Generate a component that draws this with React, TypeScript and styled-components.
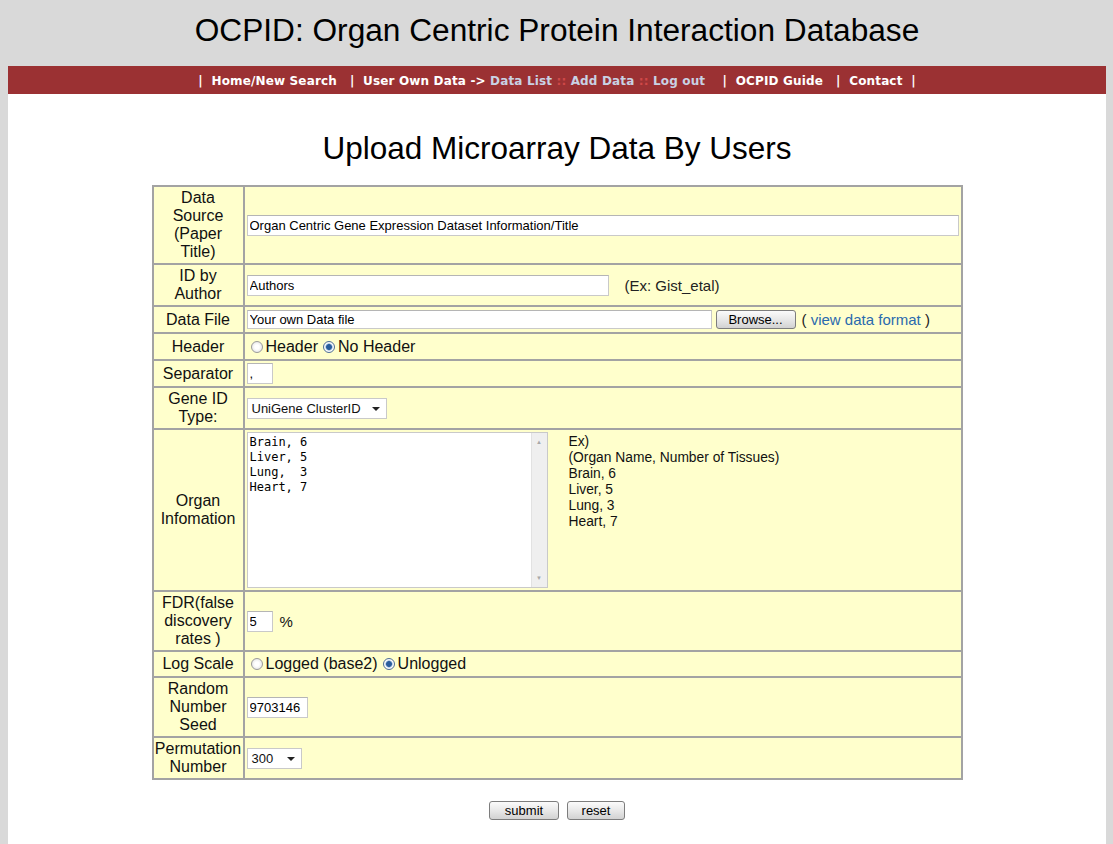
import styled, { createGlobalStyle } from "styled-components";

const GlobalStyle = createGlobalStyle`
  html, body {
    margin: 0;
    padding: 0;
    background: #d9d9d9;
    font-family: "Liberation Sans", Arial, sans-serif;
  }
`;

const Page = styled.div`
  min-height: 844px;
  display: flex;
  flex-direction: column;
  padding: 0 7px 0 8px;
`;

const Header = styled.header`
  height: 66px;
  display: flex;
  align-items: center;
  justify-content: center;
  padding-bottom: 6px;
  box-sizing: border-box;
  font-size: 31.65px;
  color: #000;
`;

const NavBar = styled.nav`
  height: 28px;
  background: #9b3133;
  display: flex;
  align-items: center;
  justify-content: center;
  font-family: "DejaVu Sans", Verdana, sans-serif;
  font-weight: bold;
  font-size: 12px;
  color: #fff;
  white-space: pre;
  letter-spacing: 0.15px;
  padding-top: 1px;
  box-sizing: border-box;
`;

const NavLink = styled.span<{ $sub?: boolean }>`
  color: ${(p) => (p.$sub ? "#c9d2e4" : "#fff")};
`;

const Sep = styled.span`
  color: #d04848;
`;

const Content = styled.main`
  flex: 1;
  background: #fff;
  display: flex;
  flex-direction: column;
  align-items: center;
  padding-top: 36px;
`;

const Title = styled.h1`
  margin: 0 0 19px;
  font-size: 31.5px;
  line-height: 36px;
  font-weight: normal;
`;

const Table = styled.table`
  width: 811px;
  border-collapse: separate;
  border-spacing: 0;
  border: 1px solid #a3a3a3;
  background: #ffffcc;
`;

const Label = styled.td`
  width: 89px;
  padding: 2px 1px;
  border: 1px solid #a3a3a3;
  text-align: center;
  font-size: 16px;
  line-height: 18px;
  color: #111;
`;

const Cell = styled.td`
  padding: 2px 2px;
  border: 1px solid #a3a3a3;
  font-size: 16px;
  color: #111;
`;

const Line = styled.div`
  display: flex;
  align-items: center;
  gap: 4px;
  min-height: 21px;
`;

const TextInput = styled.input<{ $w: number }>`
  width: ${(p) => p.$w}px;
  height: 21px;
  box-sizing: border-box;
  border: 1px solid #c9c9c9;
  border-top-color: #b5b5b5;
  background: #fff;
  font-family: "Liberation Sans", Arial, sans-serif;
  font-size: 13px;
  padding: 0 2px;
  margin: 0;
  color: #000;
  outline: none;
  display: block;
`;

const Note = styled.span`
  font-size: 15px;
  margin-left: 12px;
  color: #222;
`;

const LinkNote = styled.span`
  font-size: 15px;
  color: #222;
  margin-left: 2px;
  a {
    color: #2a6aae;
    text-decoration: none;
  }
`;

const GrayButton = styled.button<{ $w: number }>`
  width: ${(p) => p.$w}px;
  height: 19px;
  padding: 0;
  border: 1px solid #7d7d7d;
  border-radius: 3px;
  background: linear-gradient(#fbfbfb, #e6e6e6 55%, #d2d2d2);
  font-family: "Liberation Sans", Arial, sans-serif;
  font-size: 13px;
  color: #000;
`;

const RadioGroup = styled.div`
  display: flex;
  align-items: center;
  height: 21px;
  padding-left: 4px;
`;

const RadioLabel = styled.label`
  display: flex;
  align-items: center;
  margin-right: 5px;
  font-size: 16px;
`;

const Radio = styled.input.attrs({ type: "radio" })`
  appearance: none;
  width: 12px;
  height: 12px;
  margin: 0 3px 0 0;
  border-radius: 50%;
  border: 1px solid #9a9a9a;
  background: radial-gradient(circle, #fff 30%, #dcdcdc 100%);
  &:checked {
    background: radial-gradient(circle, #2a5d9c 0 2.5px, #8fb3d9 3.2px, #fff 4px, #e4e4e4 100%);
    border-color: #4e6f96;
  }
`;

const SelectBox = styled.div<{ $w: number }>`
  position: relative;
  width: ${(p) => p.$w}px;
  height: 21px;
  box-sizing: border-box;
  border: 1px solid #c9c9c9;
  background: #fff;
  font-size: 13px;
  line-height: 19px;
  padding-left: 4px;
  margin: 6px 0 5px;
  &::after {
    content: "";
    position: absolute;
    right: 6px;
    top: 8px;
    border-left: 4px solid transparent;
    border-right: 4px solid transparent;
    border-top: 4px solid #222;
  }
`;

const OrganWrap = styled.div`
  display: flex;
  gap: 21px;
`;

const AreaBox = styled.div`
  display: flex;
  width: 301px;
  height: 156px;
  box-sizing: border-box;
  border: 1px solid #c9c9c9;
  background: #fff;
`;

const TextArea = styled.textarea`
  flex: 1;
  border: none;
  resize: none;
  overflow: hidden;
  font-family: "DejaVu Sans Mono", "Liberation Mono", monospace;
  font-size: 12px;
  line-height: 15px;
  padding: 2px 2px;
  margin: 0;
  color: #000;
  outline: none;
`;

const ScrollTrack = styled.div`
  width: 15px;
  background: #efefef;
  border-left: 1px solid #e2e2e2;
  display: flex;
  flex-direction: column;
  justify-content: space-between;
  align-items: center;
  padding: 5px 0;
  font-size: 6px;
  color: #a8a8a8;
  line-height: 8px;
`;

const Example = styled.div`
  font-size: 13.8px;
  line-height: 16px;
  padding-top: 2px;
  color: #111;
`;

const Percent = styled.span`
  font-size: 15px;
  margin-left: 3px;
`;

const Buttons = styled.div`
  display: flex;
  gap: 8px;
  margin-top: 21px;
`;

const organs = "Brain, 6\nLiver, 5\nLung,  3\nHeart, 7";

export default function App() {
  return (
    <>
      <GlobalStyle />
      <Page>
        <Header>OCPID: Organ Centric Protein Interaction Database</Header>
        <NavBar>
          {"|  Home/New Search   |  User Own Data -> "}
          <NavLink $sub>Data List</NavLink>
          <Sep> :: </Sep>
          <NavLink $sub>Add Data</NavLink>
          <Sep> :: </Sep>
          <NavLink $sub>Log out</NavLink>
          {"    |  OCPID Guide   |  Contact  |"}
        </NavBar>
        <Content>
          <Title>Upload Microarray Data By Users</Title>
          <Table>
            <tbody>
              <tr>
                <Label>Data<br />Source<br />(Paper<br />Title)</Label>
                <Cell>
                  <TextInput $w={712} defaultValue="Organ Centric Gene Expression Dataset Information/Title" />
                </Cell>
              </tr>
              <tr>
                <Label>ID by<br />Author</Label>
                <Cell>
                  <Line>
                    <TextInput $w={362} defaultValue="Authors" />
                    <Note>(Ex: Gist_etal)</Note>
                  </Line>
                </Cell>
              </tr>
              <tr>
                <Label>Data File</Label>
                <Cell>
                  <Line>
                    <TextInput $w={465} style={{ height: 19 }} defaultValue="Your own Data file" />
                    <GrayButton $w={80} type="button">Browse...</GrayButton>
                    <LinkNote>
                      ( <a href="#">view data format</a> )
                    </LinkNote>
                  </Line>
                </Cell>
              </tr>
              <tr>
                <Label>Header</Label>
                <Cell>
                  <RadioGroup>
                    <RadioLabel><Radio name="hdr" />Header</RadioLabel>
                    <RadioLabel><Radio name="hdr" defaultChecked />No Header</RadioLabel>
                  </RadioGroup>
                </Cell>
              </tr>
              <tr>
                <Label>Separator</Label>
                <Cell>
                  <TextInput $w={26} defaultValue="," />
                </Cell>
              </tr>
              <tr>
                <Label>Gene ID<br />Type:</Label>
                <Cell>
                  <SelectBox $w={140}>UniGene ClusterID</SelectBox>
                </Cell>
              </tr>
              <tr>
                <Label>Organ<br />Infomation</Label>
                <Cell>
                  <OrganWrap>
                    <AreaBox>
                      <TextArea defaultValue={organs} />
                      <ScrollTrack>
                        <span>▲</span>
                        <span>▼</span>
                      </ScrollTrack>
                    </AreaBox>
                    <Example>
                      Ex)<br />
                      (Organ Name, Number of Tissues)<br />
                      Brain, 6<br />
                      Liver, 5<br />
                      Lung, 3<br />
                      Heart, 7
                    </Example>
                  </OrganWrap>
                </Cell>
              </tr>
              <tr>
                <Label>FDR(false<br />discovery<br />rates )</Label>
                <Cell>
                  <Line>
                    <TextInput $w={26} defaultValue="5" />
                    <Percent>%</Percent>
                  </Line>
                </Cell>
              </tr>
              <tr>
                <Label>Log Scale</Label>
                <Cell>
                  <RadioGroup style={{ height: 20 }}>
                    <RadioLabel><Radio name="log" />Logged (base2)</RadioLabel>
                    <RadioLabel><Radio name="log" defaultChecked />Unlogged</RadioLabel>
                  </RadioGroup>
                </Cell>
              </tr>
              <tr>
                <Label>Random<br />Number<br />Seed</Label>
                <Cell>
                  <TextInput $w={61} defaultValue="9703146" />
                </Cell>
              </tr>
              <tr>
                <Label>Permutation<br />Number</Label>
                <Cell>
                  <SelectBox $w={55} style={{ margin: "5px 0" }}>300</SelectBox>
                </Cell>
              </tr>
            </tbody>
          </Table>
          <Buttons>
            <GrayButton $w={70} type="button">submit</GrayButton>
            <GrayButton $w={58} type="button">reset</GrayButton>
          </Buttons>
        </Content>
      </Page>
    </>
  );
}
